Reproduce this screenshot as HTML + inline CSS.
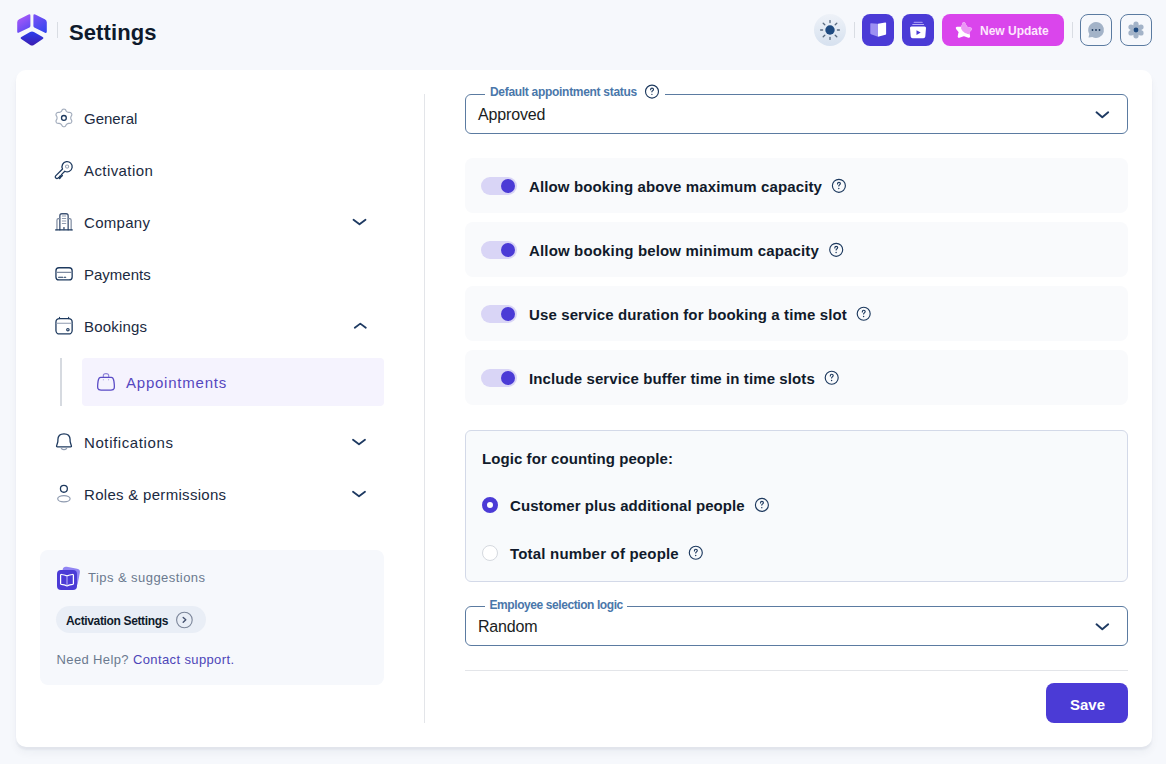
<!DOCTYPE html>
<html><head><meta charset="utf-8">
<style>
*{box-sizing:border-box;margin:0;padding:0}
html,body{width:1166px;height:764px;overflow:hidden;background:#f6f8fc;font-family:"Liberation Sans",sans-serif}
.a{position:absolute}
.t{position:absolute;white-space:nowrap;line-height:1}
svg{position:absolute;overflow:visible}
.nav{font-size:15px;color:#1b2a41;left:84px}
.hb{position:absolute;width:32px;height:32px;border-radius:8px}
.row{position:absolute;left:465px;width:663px;height:55px;background:#f9fafc;border-radius:8px}
.tg{position:absolute;left:16px;top:19px;width:36px;height:18px;border-radius:9px;background:#d9d5f6}
.tg i{position:absolute;left:20px;top:2px;width:14px;height:14px;border-radius:50%;background:#4b3bd6}
.rl{font-size:15px;font-weight:700;color:#111a2b;left:64px;top:21px}
.lg{font-size:12px;font-weight:700;color:#4a77aa}
</style></head><body>

<!-- header -->
<svg class="a" style="left:0;top:0" width="60" height="60" viewBox="0 0 60 60">
<defs>
<linearGradient id="g1" x1="17" y1="15" x2="29" y2="33" gradientUnits="userSpaceOnUse"><stop offset="0" stop-color="#b65cf9"/><stop offset="1" stop-color="#5048f2"/></linearGradient>
<linearGradient id="g2" x1="34" y1="14" x2="46" y2="33" gradientUnits="userSpaceOnUse"><stop offset="0" stop-color="#7d52f6"/><stop offset="1" stop-color="#3045ee"/></linearGradient>
<linearGradient id="g3" x1="32" y1="31" x2="32" y2="46" gradientUnits="userSpaceOnUse"><stop offset="0" stop-color="#2c40f0"/><stop offset="1" stop-color="#3c1cae"/></linearGradient>
</defs>
<path fill="url(#g1)" d="M19.17 19.13 L28.61 14.48 Q30.40 13.60 30.40 15.60 L30.40 26.00 Q30.40 27.00 29.50 27.44 L18.99 32.62 Q17.20 33.50 17.20 31.50 L17.20 22.30 Q17.20 20.10 19.17 19.13Z"/>
<path fill="url(#g2)" d="M44.82 19.14 L35.20 14.47 Q33.40 13.60 33.40 15.60 L33.40 26.00 Q33.40 27.00 34.30 27.44 L45.00 32.63 Q46.80 33.50 46.80 31.50 L46.80 22.30 Q46.80 20.10 44.82 19.14Z"/>
<path fill="url(#g3)" d="M21.34 37.01 L30.09 31.99 Q32.00 30.90 33.91 31.99 L42.66 37.01 Q44.40 38.00 42.73 39.09 L33.84 44.90 Q32.00 46.10 30.16 44.90 L21.27 39.09 Q19.60 38.00 21.34 37.01Z"/>
</svg>
<div class="a" style="left:57px;top:22px;width:1px;height:16px;background:#d9dde3"></div>
<div class="t" style="left:69px;top:22px;font-size:22px;font-weight:700;color:#0e1a2c;letter-spacing:0.1px">Settings</div>

<div class="a" style="left:814px;top:14px;width:32px;height:32px;border-radius:50%;background:linear-gradient(#eef2f8,#d6e1ef)"></div>
<svg style="left:814px;top:14px" width="32" height="32" viewBox="0 0 32 32">
<circle cx="16" cy="16" r="4.7" fill="#1e4a80"/>
<g stroke="#5a6b80" stroke-width="1.3" stroke-linecap="round">
<line x1="16" y1="6.6" x2="16" y2="8.6"/><line x1="16" y1="23.4" x2="16" y2="25.4"/>
<line x1="6.6" y1="16" x2="8.6" y2="16"/><line x1="23.4" y1="16" x2="25.4" y2="16"/>
<line x1="9.2" y1="9.2" x2="10.8" y2="10.8"/><line x1="21.2" y1="21.2" x2="22.8" y2="22.8"/>
<line x1="22.8" y1="9.2" x2="21.2" y2="10.8"/><line x1="10.8" y1="21.2" x2="9.2" y2="22.8"/>
</g></svg>
<div class="a" style="left:854px;top:22px;width:1px;height:16px;background:#d9dde3"></div>

<div class="hb" style="left:862px;top:14px;background:#4b3bd6"></div>
<svg style="left:862px;top:14px" width="32" height="32" viewBox="0 0 32 32">
<path fill="#9d90f2" d="M9 9.2 L15.6 9.8 Q16 9.9 16 10.3 L16 22.8 L9 20.2 Q8.3 19.9 8.3 19.2 L8.3 10 Q8.3 9.1 9 9.2Z"/>
<path fill="#fff" d="M16 9.8 L23.3 8.5 Q24.1 8.4 24.1 9.2 L24.1 19.9 Q24.1 20.6 23.4 20.8 L16 22.8Z"/>
</svg>
<div class="hb" style="left:902px;top:14px;background:#4b3bd6"></div>
<svg style="left:902px;top:14px" width="32" height="32" viewBox="0 0 32 32">
<rect x="11.6" y="7.8" width="9.1" height="1.2" rx="0.6" fill="#9d90f2"/>
<rect x="10.2" y="9.9" width="11.9" height="1.2" rx="0.6" fill="#b9b0f6"/>
<path fill="#fff" d="M9.5 12.4 L22.5 12.4 Q24.2 12.4 24 14 L23.3 22.4 Q23.1 24.2 21.4 24.2 L10.6 24.2 Q8.9 24.2 8.7 22.4 L8 14 Q7.8 12.4 9.5 12.4Z"/>
<path fill="#4b3bd6" d="M14.5 16.2 L18.7 18.6 L14.5 21.1Z"/>
</svg>

<div class="hb" style="left:942px;top:14px;width:122px;background:#da45ec"></div>
<svg style="left:942px;top:14px" width="40" height="32" viewBox="0 0 40 32">
<defs><clipPath id="stc"><path d="M18.6 4 L36 4 L36 20.2 L27 20.2 Q22.6 19.6 20.5 16.9 Q19.2 15 18.8 12.2Z"/></clipPath></defs>
<path id="stp" d="M21.9 9.3 L24.2 13.8 L28.8 14.9 L26 17.8 L26.8 22.5 L21.9 20.7 L17 22.5 L17.9 17.8 L15.1 14.1 L20 14.1Z" fill="#fff" stroke="#fff" stroke-width="2.6" stroke-linejoin="round"/>
<g clip-path="url(#stc)"><path d="M21.9 9.3 L24.2 13.8 L28.8 14.9 L26 17.8 L26.8 22.5 L21.9 20.7 L17 22.5 L17.9 17.8 L15.1 14.1 L20 14.1Z" fill="#eb95f5" stroke="#eb95f5" stroke-width="2.6" stroke-linejoin="round"/></g>
</svg>
<div class="t" style="left:980px;top:24.8px;font-size:12px;font-weight:700;color:#fde8fd">New Update</div>
<div class="a" style="left:1072px;top:22px;width:1px;height:16px;background:#d9dde3"></div>

<div class="hb" style="left:1080px;top:14px;border:1px solid #5b7ba1"></div>
<svg style="left:1080px;top:14px" width="32" height="32" viewBox="0 0 32 32">
<path fill="#a3b3c8" d="M16 8 A8 8 0 1 1 12.3 23.1 L9 23.6 Q8.4 23.6 8.6 23 L9.3 20.1 A8 8 0 0 1 16 8Z"/>
<circle cx="12.5" cy="16" r="0.9" fill="#1e3a5f"/><circle cx="16" cy="16" r="0.9" fill="#1e3a5f"/><circle cx="19.5" cy="16" r="0.9" fill="#1e3a5f"/>
</svg>
<div class="hb" style="left:1120px;top:14px;border:1px solid #5b7ba1"></div>
<svg style="left:1120px;top:14px" width="32" height="32" viewBox="0 0 32 32">
<g fill="#a3b3c8">
<circle cx="16" cy="16" r="5.6"/>
<circle cx="16" cy="10.2" r="2.6"/><circle cx="16" cy="21.8" r="2.6"/>
<circle cx="11" cy="13.1" r="2.6"/><circle cx="21" cy="13.1" r="2.6"/>
<circle cx="11" cy="18.9" r="2.6"/><circle cx="21" cy="18.9" r="2.6"/>
</g>
<circle cx="16" cy="16" r="2.4" fill="#1e4a80"/>
</svg>

<!-- card -->
<div class="a" style="left:16px;top:70px;width:1136px;height:677px;background:#fff;border-radius:10px;box-shadow:0 3px 2px rgba(30,40,70,0.05),0 6px 9px rgba(30,40,70,0.045)"></div>

<!-- sidebar -->
<div class="t nav" style="top:111.1px">General</div>
<div class="t nav" style="top:162.8px;letter-spacing:0.42px">Activation</div>
<div class="t nav" style="top:215px;letter-spacing:0.3px">Company</div>
<div class="t nav" style="top:267.2px">Payments</div>
<div class="t nav" style="top:318.9px;letter-spacing:0.2px">Bookings</div>
<div class="a" style="left:60px;top:358px;width:2px;height:48px;background:#d6dae0"></div>
<div class="a" style="left:82px;top:358px;width:302px;height:48px;background:#f5f3fe;border-radius:4px"></div>
<div class="t" style="left:126px;top:375.2px;font-size:15px;color:#5547c0;letter-spacing:0.77px">Appointments</div>
<div class="t nav" style="top:435.3px;letter-spacing:0.6px">Notifications</div>
<div class="t nav" style="top:486.6px;letter-spacing:0.3px">Roles &amp; permissions</div>

<!-- tips -->
<div class="a" style="left:40px;top:550px;width:344px;height:135px;background:#f6f8fc;border-radius:8px"></div>
<div class="t" style="left:88px;top:571.3px;font-size:13px;color:#6b7a8f;letter-spacing:0.45px">Tips &amp; suggestions</div>
<div class="a" style="left:56px;top:606px;width:150px;height:27px;border-radius:14px;background:#e9eef6"></div>
<div class="t" style="left:66px;top:614.7px;font-size:12px;font-weight:700;color:#0f1a2b;letter-spacing:-0.35px">Activation Settings</div>
<div class="t" style="left:56.5px;top:653.3px;font-size:13px;color:#6b7a8f;letter-spacing:0.38px">Need Help? <span style="color:#4d45b8">Contact support.</span></div>

<!-- divider -->
<div class="a" style="left:424px;top:94px;width:1px;height:629px;background:#e3e5e9"></div>

<!-- right content -->
<div class="a" style="left:465px;top:94px;width:663px;height:40px;border:1px solid #5b7ba1;border-radius:6px"></div>
<div class="a" style="left:485px;top:88px;width:180px;height:10px;background:#fff"></div>
<div class="t lg" style="left:490px;top:86.1px;letter-spacing:-0.3px">Default appointment status</div>
<div class="t" style="left:478px;top:107.2px;font-size:16px;color:#1a1d22;letter-spacing:-0.15px">Approved</div>

<div class="row" style="top:158px"><div class="tg"><i></i></div><div class="t rl" style="letter-spacing:0.13px">Allow booking above maximum capacity</div></div>
<div class="row" style="top:222px"><div class="tg"><i></i></div><div class="t rl" style="letter-spacing:0.16px">Allow booking below minimum capacity</div></div>
<div class="row" style="top:286px"><div class="tg"><i></i></div><div class="t rl" style="letter-spacing:0.12px">Use service duration for booking a time slot</div></div>
<div class="row" style="top:350px"><div class="tg"><i></i></div><div class="t rl" style="letter-spacing:0.1px">Include service buffer time in time slots</div></div>

<div class="a" style="left:465px;top:430px;width:663px;height:152px;border:1px solid #d3d9e8;border-radius:6px;background:#f8fafc"></div>
<div class="t" style="left:482px;top:451px;font-size:15px;font-weight:700;color:#111a2b;letter-spacing:0.07px">Logic for counting people:</div>
<div class="a" style="left:482px;top:497px;width:16px;height:16px;border-radius:50%;border:5.5px solid #4b3bd6;background:#fff"></div>
<div class="t" style="left:510px;top:497.9px;font-size:15px;font-weight:700;color:#111a2b;letter-spacing:0.07px">Customer plus additional people</div>
<div class="a" style="left:482px;top:545px;width:16px;height:16px;border-radius:50%;border:1px solid #d5d9df;background:#fff"></div>
<div class="t" style="left:510px;top:546.3px;font-size:15px;font-weight:700;color:#111a2b;letter-spacing:0.19px">Total number of people</div>

<div class="a" style="left:465px;top:606px;width:663px;height:40px;border:1px solid #5b7ba1;border-radius:6px"></div>
<div class="a" style="left:485px;top:600px;width:142px;height:10px;background:#fff"></div>
<div class="t lg" style="left:489.5px;top:598.6px;letter-spacing:-0.42px">Employee selection logic</div>
<div class="t" style="left:478px;top:619.2px;font-size:16px;color:#1a1d22;letter-spacing:-0.2px">Random</div>

<div class="a" style="left:465px;top:670px;width:663px;height:1px;background:#e3e5e9"></div>
<div class="a" style="left:1046px;top:683px;width:82px;height:40px;border-radius:8px;background:#4b3bd6"></div>
<div class="t" style="left:1070px;top:697px;font-size:15px;font-weight:700;color:#fff">Save</div>

<!-- icon overlay -->
<svg style="left:0;top:0" width="1166" height="764" viewBox="0 0 1166 764">
<defs>
<symbol id="hq" viewBox="0 0 16 16">
<circle cx="8" cy="8" r="6.5" fill="none" stroke="#1e3a5f" stroke-width="1.15"/>
<path d="M6.6 6.1 Q6.6 4.5 8 4.5 Q9.5 4.5 9.5 5.8 Q9.5 6.7 8.6 7.1 Q7.9 7.5 7.9 8.2" fill="none" stroke="#1e3a5f" stroke-width="1.15" stroke-linecap="round"/>
<circle cx="7.9" cy="10.75" r="0.72" fill="#1e3a5f"/>
</symbol>
<symbol id="chd" viewBox="0 0 20 20"><path d="M3.5 8 L9.5 12.5 L15.5 8" fill="none" stroke="#1e3a62" stroke-width="1.8" stroke-linecap="round" stroke-linejoin="round"/></symbol>
</defs>
<!-- help icons -->
<use href="#hq" x="644" y="83.6" width="16" height="16"/>
<use href="#hq" x="830.9" y="177.8" width="16" height="16"/>
<use href="#hq" x="828.2" y="241.8" width="16" height="16"/>
<use href="#hq" x="855.7" y="305.8" width="16" height="16"/>
<use href="#hq" x="823.7" y="369.8" width="16" height="16"/>
<use href="#hq" x="753.9" y="496.9" width="16" height="16"/>
<use href="#hq" x="687.8" y="544.8" width="16" height="16"/>
<!-- chevrons -->
<use href="#chd" x="350" y="211.8" width="20" height="20"/>
<use href="#chd" x="349.5" y="431.8" width="20" height="20"/>
<use href="#chd" x="349.5" y="483.8" width="20" height="20"/>
<path d="M354.8 327.8 L360.3 323.6 L365.8 327.8" fill="none" stroke="#1e3a62" stroke-width="1.8" stroke-linecap="round" stroke-linejoin="round"/>
<path d="M1096.5 112.3 L1102.3 117.3 L1108.2 112.3" fill="none" stroke="#1e3a62" stroke-width="1.9" stroke-linecap="round" stroke-linejoin="round"/>
<path d="M1096.5 624.3 L1102.3 629.3 L1108.2 624.3" fill="none" stroke="#1e3a62" stroke-width="1.9" stroke-linecap="round" stroke-linejoin="round"/>

<!-- General gear -->
<g transform="translate(54.9 108.9)">
<path d="M15.8 9.0 15.9 8.4 16.0 7.8 16.5 7.0 16.9 6.1 16.9 5.3 16.6 4.6 16.1 4.0 15.5 3.6 14.5 3.5 13.6 3.5 13.0 3.3 12.4 3.1 11.9 2.7 11.4 2.3 11.0 1.5 10.5 0.7 9.8 0.3 9.0 0.2 8.2 0.3 7.5 0.7 7.0 1.5 6.6 2.3 6.1 2.7 5.6 3.1 5.0 3.3 4.4 3.5 3.5 3.5 2.5 3.6 1.9 4.0 1.4 4.6 1.1 5.3 1.1 6.1 1.5 7.0 2.0 7.8 2.1 8.4 2.2 9.0 2.1 9.6 2.0 10.2 1.5 11.0 1.1 11.9 1.1 12.7 1.4 13.4 1.9 14.0 2.5 14.4 3.5 14.5 4.4 14.5 5.0 14.7 5.6 14.9 6.1 15.3 6.6 15.7 7.0 16.5 7.5 17.3 8.2 17.7 9.0 17.8 9.8 17.7 10.5 17.3 11.0 16.5 11.4 15.7 11.9 15.3 12.4 14.9 13.0 14.7 13.6 14.5 14.5 14.5 15.5 14.4 16.1 14.0 16.6 13.4 16.9 12.7 16.9 11.9 16.5 11.0 16.0 10.2 15.9 9.6Z" fill="none" stroke="#a3adbd" stroke-width="1.15" stroke-linejoin="round"/>
<circle cx="9" cy="9" r="2.4" fill="none" stroke="#1e3a5f" stroke-width="1.3"/>
</g>
<!-- key -->
<g fill="none" stroke-linecap="round" stroke-linejoin="round">
<path d="M64.81 171.26 A5.1 5.1 0 1 0 62.54 168.99 L55.64 175.89 Q54.66 176.88 55.79 178.01 Q56.92 179.14 57.91 178.16 L58.61 177.45 L59.60 178.44 L60.59 177.45 L59.60 176.46 L60.45 175.61 L61.44 176.60 L62.43 175.61 L61.44 174.62 Z" stroke="#1e3a5f" stroke-width="1.3"/>
<circle cx="67.1" cy="166.6" r="1.6" stroke="#9aa5b6" stroke-width="1.1"/>
</g>
<!-- building -->
<g fill="none" stroke-linecap="round" stroke-linejoin="round">
<path d="M59.85 229.8 V215.8 Q59.85 213.75 61.9 213.75 H66.1 Q68.15 213.75 68.15 215.8 V229.8" stroke="#3d5273" stroke-width="1.3"/>
<path d="M56.95 229.8 V220.2 Q56.95 218.65 58.5 218.65 H59.85 M68.15 218.65 H69.6 Q71.15 218.65 71.15 220.2 V229.8" stroke="#7d8aa0" stroke-width="1.2"/>
<path d="M55.7 229.9 H72.2" stroke="#1e3a5f" stroke-width="1.4"/>
<path d="M62.3 216 H65.8 M62.3 218.5 H65.8 M62.3 221 H65.8 M62.3 223.5 H65.8" stroke="#8f9bb0" stroke-width="1"/>
<path d="M63.95 227.6 V229.6" stroke="#3d5273" stroke-width="1.4"/>
</g>
<!-- card -->
<g fill="none" stroke-linecap="round">
<rect x="55.95" y="267.75" width="16.2" height="12.2" rx="3" stroke="#1e3a5f" stroke-width="1.3"/>
<path d="M56.3 272.4 H71.8" stroke="#7d8aa0" stroke-width="1.1"/>
<path d="M58.6 277.3 H62.8 M64.3 277.3 H65.7" stroke="#1e3a5f" stroke-width="1.1"/>
</g>
<!-- calendar -->
<g fill="none" stroke-linecap="round">
<rect x="55.95" y="318.55" width="16.2" height="15.4" rx="3.5" stroke="#1e3a5f" stroke-width="1.3"/>
<path d="M56.3 323.2 H71.8" stroke="#8f9bb0" stroke-width="1.1"/>
<path d="M59.5 317.4 V318.6 M68.6 317.4 V318.6" stroke="#1e3a5f" stroke-width="1.1"/>
<circle cx="67.9" cy="329.7" r="1.2" stroke="#1e3a5f" stroke-width="1.2"/>
</g>
<!-- bag -->
<g fill="none" stroke-linecap="round" stroke-linejoin="round">
<path d="M103.3 376.8 V375.6 Q103.3 373.6 106 373.6 Q108.7 373.6 108.7 375.6 V376.8" stroke="#8d82d8" stroke-width="1.1"/>
<path d="M100.8 377.3 H111.2 C113 377.3 113.5 378.4 113.9 381.2 C114.3 384 114.6 386.6 114.2 388.2 C113.8 389.6 112.8 390.1 111 390.1 H101 C99.2 390.1 98.2 389.6 97.8 388.2 C97.4 386.6 97.7 384 98.1 381.2 C98.5 378.4 99 377.3 100.8 377.3Z" stroke="#5a4bc6" stroke-width="1.3"/>
<circle cx="103.3" cy="379.7" r="0.5" fill="#8d82d8"/><circle cx="108.6" cy="379.7" r="0.5" fill="#8d82d8"/>
</g>
<!-- bell -->
<g fill="none" stroke-linecap="round" stroke-linejoin="round">
<path d="M57.4 446.8 H70.7 Q71.6 446.8 71.4 445.9 L70.3 442.2 Q70.1 441.5 70.1 440.6 V439.6 Q70 433.8 64 433.8 Q58 433.8 57.9 439.6 V440.6 Q57.9 441.5 57.7 442.2 L56.6 445.9 Q56.4 446.8 57.4 446.8Z" stroke="#1e3a5f" stroke-width="1.3"/>
<path d="M61.3 448.5 Q64 450.8 66.7 448.5" stroke="#8f9bb0" stroke-width="1.1"/>
</g>
<!-- person -->
<g fill="none">
<circle cx="63.9" cy="488.8" r="3.45" stroke="#1e3a5f" stroke-width="1.3"/>
<ellipse cx="63.9" cy="498.8" rx="6.2" ry="3.1" stroke="#8f9bb0" stroke-width="1.2"/>
</g>
<!-- tips book badge -->
<g>
<rect x="61.5" y="567.6" width="17.5" height="17.5" rx="3.5" fill="#9084f3" transform="rotate(11 70.25 576.35)"/>
<rect x="57" y="570" width="20" height="20" rx="4" fill="#4b3bd6"/>
<path d="M60.6 575.3 Q60.6 574.4 61.5 574.5 Q64.3 574.8 67 575.9 Q69.7 574.8 72.5 574.5 Q73.4 574.4 73.4 575.3 V583.6 Q73.4 584.3 72.7 584.4 Q69.8 584.7 67 585.9 Q64.2 584.7 61.3 584.4 Q60.6 584.3 60.6 583.6Z" fill="none" stroke="#fff" stroke-width="1.25" stroke-linejoin="round"/>
<path d="M67 576.2 V585.4" stroke="#b4acf6" stroke-width="1.1"/>
</g>
<!-- chip arrow -->
<circle cx="184.4" cy="620" r="7.8" fill="none" stroke="#7b8599" stroke-width="1.1"/>
<path d="M183.2 617.4 L185.8 619.8 L183.2 622.3" fill="none" stroke="#465270" stroke-width="1.4" stroke-linecap="round" stroke-linejoin="round"/>
</svg>
</body></html>
